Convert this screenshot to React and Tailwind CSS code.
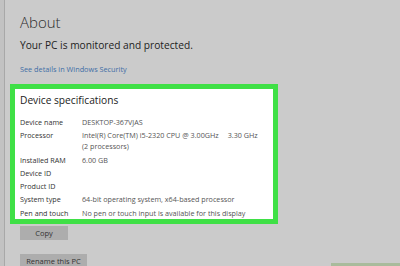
import React from "react";

const specs = [
  ["Device name", ["DESKTOP-367VJAS"]],
  ["Processor", ["Intel(R) Core(TM) i5-2320 CPU @ 3.00GHz\u2003 3.30 GHz", "(2 processors)"]],
  ["Installed RAM", ["6.00 GB"]],
  ["Device ID", [""]],
  ["Product ID", [""]],
  ["System type", ["64-bit operating system, x64-based processor"]],
  ["Pen and touch", ["No pen or touch input is available for this display"]],
];

const App = () => {
  return (
    <div
      className="relative flex w-[400px] h-[266px] overflow-hidden bg-[#cbcbcb] text-[#2a2a2a]"
      style={{ fontFamily: '"Open Sans", "Noto Sans", sans-serif' }}
    >
      {/* Left window edge */}
      <div className="w-[5px] shrink-0 bg-[#c2c2c2] border-r border-[#a8a8a8]" />

      <div className="flex flex-col pl-[5px]">
        <h1 className="mt-[13px] pl-[10px] text-[15px] leading-[18px] font-light text-[#2b2b2b]">About</h1>
        <p className="mt-[7px] pl-[10px] text-[10.2px] leading-[14px] text-[#222]">
          Your PC is monitored and protected.
        </p>
        <p className="mt-[12px] pl-[10px] text-[7.3px] leading-[10px] text-[#3f6ea6]">
          See details in Windows Security
        </p>

        {/* Highlighted specs panel */}
        <div className="mt-[10px] w-[268px] h-[143px] border-[5px] border-[#3fe046] bg-white pl-[5px] pt-[4px]">
          <h2 className="text-[10.2px] leading-[14px] text-[#222]">Device specifications</h2>
          <div className="mt-[10px] flex flex-col gap-[2.3px] text-[7.2px] leading-[11px]">
            {specs.map(([label, lines]) => (
              <div key={label} className="flex">
                <span className="w-[62px] shrink-0 text-[#333]">{label}</span>
                <span className="flex flex-col whitespace-nowrap text-[#555]">
                  {lines.map((line, i) => (
                    <span key={i} className="h-[11px]">{line}</span>
                  ))}
                </span>
              </div>
            ))}
          </div>
        </div>

        <button className="mt-[2px] ml-[10px] w-[48px] h-[14px] bg-[#adadad] text-[7.5px] leading-[14px] text-[#333]">
          Copy
        </button>
        <button className="mt-[14px] ml-[10px] w-[67px] h-[14px] bg-[#adadad] text-[7.5px] leading-[14px] text-[#333]">
          Rename this PC
        </button>
      </div>

      {/* Partly visible element at the bottom edge */}
      <div className="absolute bottom-0 right-0 w-[69px] h-[3px] bg-[#a9bb9c]" />
    </div>
  );
};

export default App;
